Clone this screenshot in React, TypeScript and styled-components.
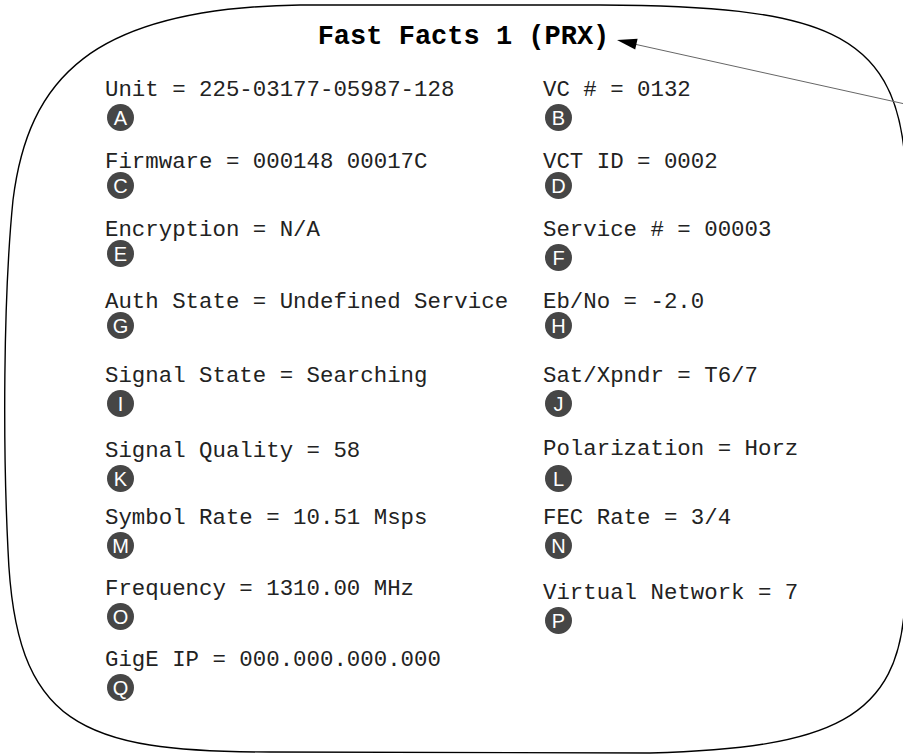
import styled, { createGlobalStyle } from "styled-components";

const GlobalStyle = createGlobalStyle`
  html, body {
    margin: 0;
    padding: 0;
    background: #fff;
  }
`;

type Fact = {
  label: string;
  letter: string;
  lift?: number; // badge sits a little closer to its text on some rows
  dy?: number; // small vertical nudge of the whole entry
};

const leftFacts: Fact[] = [
  { label: "Unit = 225-03177-05987-128", letter: "A" },
  { label: "Firmware = 000148 00017C", letter: "C", lift: 4 },
  { label: "Encryption = N/A", letter: "E", lift: 4 },
  { label: "Auth State = Undefined Service", letter: "G", lift: 4 },
  { label: "Signal State = Searching", letter: "I" },
  { label: "Signal Quality = 58", letter: "K" },
  { label: "Symbol Rate = 10.51 Msps", letter: "M" },
  { label: "Frequency = 1310.00 MHz", letter: "O" },
  { label: "GigE IP = 000.000.000.000", letter: "Q" },
];

const rightFacts: Fact[] = [
  { label: "VC # = 0132", letter: "B" },
  { label: "VCT ID = 0002", letter: "D", lift: 4 },
  { label: "Service # = 00003", letter: "F" },
  { label: "Eb/No = -2.0", letter: "H", lift: 4 },
  { label: "Sat/Xpndr = T6/7", letter: "J" },
  { label: "Polarization = Horz", letter: "L", dy: -2, lift: -2 },
  { label: "FEC Rate = 3/4", letter: "N" },
  { label: "Virtual Network = 7", letter: "P", dy: 4 },
];

export default function App() {
  return (
    <>
      <GlobalStyle />
      <Screen>
        <Frame viewBox="0 0 903 755" aria-hidden="true">
          <path
            d="M 300 5 L 600 5 C 820 6 895 30 905 160 C 910 300 910 450 905 600 C 900 720 830 748 650 753 L 270 752 C 80 752 15 725 8 550 C 3 450 3 300 13 200 C 28 80 90 8 300 5 Z"
            fill="none"
            stroke="#000"
            strokeWidth="1.4"
          />
          <line x1="905" y1="104" x2="634" y2="44" stroke="#666" strokeWidth="1" />
          <polygon points="617,40 637.6,38.8 635.2,49.6" fill="#000" />
        </Frame>
        <Content>
          <Header>
            <Title>Fast Facts 1 (PRX)</Title>
          </Header>
          <FactGrid>
            {leftFacts.map((f) => (
              <Entry key={f.letter} $dy={f.dy ?? 0}>
                <Label>{f.label}</Label>
                <Badge $lift={f.lift ?? 0}>{f.letter}</Badge>
              </Entry>
            ))}
            {rightFacts.map((f) => (
              <Entry key={f.letter} $dy={f.dy ?? 0}>
                <Label>{f.label}</Label>
                <Badge $lift={f.lift ?? 0}>{f.letter}</Badge>
              </Entry>
            ))}
          </FactGrid>
        </Content>
      </Screen>
    </>
  );
}

const Screen = styled.div`
  position: relative;
  width: 903px;
  height: 755px;
  overflow: hidden;
  background: #fff;
`;

const Frame = styled.svg`
  position: absolute;
  inset: 0;
  width: 903px;
  height: 755px;
  z-index: 0;
`;

const Content = styled.div`
  position: relative;
  z-index: 1;
  display: flex;
  flex-direction: column;
`;

const Header = styled.header`
  display: flex;
  justify-content: center;
  padding: 22px 0 0 24px;
`;

const Title = styled.h1`
  margin: 0;
  font-family: "Liberation Mono", "Courier New", monospace;
  font-weight: bold;
  font-size: 27px;
  line-height: 30px;
  color: #000;
  white-space: pre;
`;

const FactGrid = styled.div`
  display: grid;
  grid-auto-flow: column;
  grid-template-columns: 438px 1fr;
  grid-template-rows: 72px 68px 72px 74px 75px 67px 71px 71px 60px;
  margin-top: 26px;
  padding-left: 105px;
`;

const Entry = styled.div<{ $dy: number }>`
  display: flex;
  flex-direction: column;
  align-items: flex-start;
  margin-top: ${(p) => p.$dy}px;
`;

const Label = styled.span`
  font-family: "Liberation Mono", "Courier New", monospace;
  font-size: 22.4px;
  line-height: 24px;
  color: #222;
  white-space: pre;
`;

const Badge = styled.span<{ $lift: number }>`
  display: flex;
  align-items: center;
  justify-content: center;
  width: 27px;
  height: 27px;
  margin: ${(p) => 2 - p.$lift}px 0 0 2px;
  border-radius: 50%;
  background: #464646;
  color: #fff;
  font-family: "Liberation Sans", Arial, sans-serif;
  font-size: 20px;
  line-height: 1;
`;
